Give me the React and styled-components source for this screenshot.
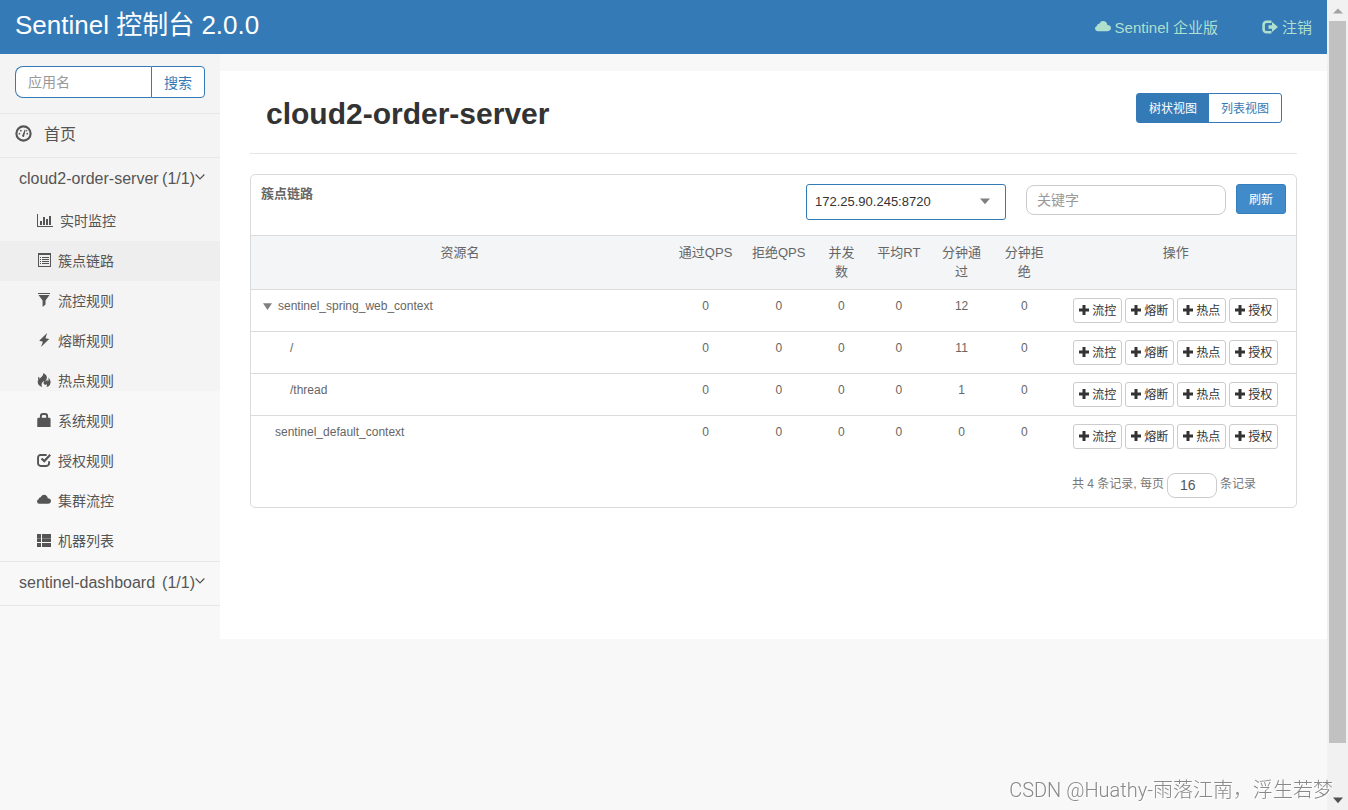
import React, { useState } from "react";
import styled, { createGlobalStyle } from "styled-components";

const menuItems = [
  { label: "实时监控", icon: "stats" },
  { label: "簇点链路", icon: "list" },
  { label: "流控规则", icon: "filter" },
  { label: "熔断规则", icon: "flash" },
  { label: "热点规则", icon: "fire" },
  { label: "系统规则", icon: "lock" },
  { label: "授权规则", icon: "check" },
  { label: "集群流控", icon: "cloud" },
  { label: "机器列表", icon: "grid" },
];

const columns = [
  { title: "资源名", width: "40%" },
  { title: "通过QPS", width: "7%" },
  { title: "拒绝QPS", width: "7%" },
  { title: "并发数", width: "5%" },
  { title: "平均RT", width: "6%" },
  { title: "分钟通过", width: "6%" },
  { title: "分钟拒绝", width: "6%" },
  { title: "操作", width: "23%" },
];

const resources = [
  { name: "sentinel_spring_web_context", depth: 0, parent: true, stats: [0, 0, 0, 0, 12, 0] },
  { name: "/", depth: 1, stats: [0, 0, 0, 0, 11, 0] },
  { name: "/thread", depth: 1, stats: [0, 0, 0, 0, 1, 0] },
  { name: "sentinel_default_context", depth: 0, stats: [0, 0, 0, 0, 0, 0] },
];

const actions = ["流控", "熔断", "热点", "授权"];

const icons = {
  cloud: (
    <path d="M2.600 12.200A2.700 2.700 0 0 1 0 9.600c0-1.300.9-2.200 2-2.500C2 5.600 3.200 4.700 4.300 4.900 5 3.200 6.300 2 8 2c2.300 0 4 1.600 4.300 4 2.200 0 3.700 1.300 3.700 3.100 0 1.800-1.500 3.100-3.300 3.100z" />
  ),
  logout: (
    <>
      <path
        d="M9.500 2.700H4.500A2.900 2.900 0 0 0 1.600 5.600v4.800a2.900 2.900 0 0 0 2.900 2.900h5"
        fill="none"
        stroke="currentColor"
        strokeWidth="2.600"
      />
      <path d="M6.500 6.200H10V3L16 8l-6 5V9.800H6.500z" />
    </>
  ),
  dashboard: (
    <>
      <circle cx="8" cy="8" r="6.700" fill="none" stroke="currentColor" strokeWidth="2" />
      <path d="M7 9.500 9.200 4.200l.8.4-1.300 5.600a1 1 0 1 1-1.700-.7z" />
      <circle cx="4.200" cy="8.200" r=".8" />
      <circle cx="5.500" cy="5.300" r=".8" />
      <circle cx="11.500" cy="8.200" r=".8" />
      <circle cx="11" cy="5.300" r=".7" />
    </>
  ),
  stats: <path d="M0 2h1v12h15v1H0zM3 9h2v4H3zM6 5h2v8H6zM9 7h2v6H9zM12 4h2v9h-2z" />,
  list: (
    <path
      transform="scale(1.143)"
      fillRule="evenodd"
      d="M1 0h13v14H1zM2 2v11h11V2zM3 4h1v1H3zm2 0h7v1H5zM3 6h1v1H3zm2 0h7v1H5zM3 8h1v1H3zm2 0h7v1H5zM3 10h1v1H3zm2 0h7v1H5z"
    />
  ),
  filter: <path transform="scale(1.143)" d="M1 0h12v1H1zM1.500 2h11L8.500 7.500v4L5.600 14V7.500z" />,
  flash: <path d="M11.500 0 2.500 8.800l4.300 1.100L4.500 16 14 6.900 9.700 5.900z" />,
  fire: (
    <path d="M7 0c3.500 1.600 5 4 4 6.700-.4 1-1.300 1.700-1 2.700.9-.2 1.300-1.200 1.200-2.200 1 .6 1.300 1.700.9 2.700 1.300-1 1.500-2.700.6-4.900 2.800 2.300 3.500 5.400 2.200 8-.8 1.500-2.200 2.600-4.300 3 1-1.100 1-2.200.4-3.200-1.100 1-2.500.8-3.200-.3-.6-1-.2-2.200.7-3.500-3 1-4.200 3.900-2.500 6.900C3 15.200.7 13 .8 10c.1-2 1.500-3 3-4.300C5.800 4 7.600 2.500 7 0zM2.200 4.300c.9 1 .7 2.300-.6 3.400C.8 6.500 1 5.200 2.200 4.300z" />
  ),
  lock: (
    <path
      fillRule="evenodd"
      d="M3.300 5.500V3.500A3.500 3.500 0 0 1 6.800 0h2.400a3.500 3.500 0 0 1 3.500 3.500v2H14A1.500 1.500 0 0 1 15.500 7v9H.3V7a1.500 1.500 0 0 1 1.500-1.500zm2.200 0h5V4a1.700 1.700 0 0 0-1.700-1.700H7.200A1.700 1.700 0 0 0 5.500 4z"
    />
  ),
  check: (
    <>
      <path
        d="M11 2.200H4.200a3 3 0 0 0-3 3v6.600a3 3 0 0 0 3 3h6.600a3 3 0 0 0 3-3V9.500"
        fill="none"
        stroke="currentColor"
        strokeWidth="2.200"
      />
      <path d="m4.300 7 1.700-1.700 2.300 2.200L14.300 1 16 2.800 8.400 11.200z" />
    </>
  ),
  grid: (
    <path
      transform="scale(1.143)"
      d="M0 1h4v4H0zM5 1h9v4H5zM0 5.300h4V9H0zM5 5.300h9V9H5zM0 10h4v4H0zM5 10h9v4H5z"
    />
  ),
  plus: <path d="M5.600 0h4.800v5.600H16v4.800h-5.600V16H5.600v-5.600H0V5.600h5.600z" />,
  chevron: <path d="M1 4l7 7 7-7" fill="none" stroke="currentColor" strokeWidth="2" />,
  caret: <path d="M0 4h16L8 13z" />,
  triangle: <path d="M0 2h16L8 14z" />,
  up: <path d="M0 12h16L8 4z" />,
};

const Icon = ({ name, size = 14 }) => (
  <Glyph viewBox="0 0 16 16" $size={size} aria-hidden="true">
    {icons[name]}
  </Glyph>
);

const App = () => {
  const [active, setActive] = useState("簇点链路");
  const [view, setView] = useState("tree");
  const [open, setOpen] = useState(true);

  const rows = resources.filter((row) => open || row.depth === 0);

  return (
    <Window>
      <GlobalStyle />
      <Page>
        <Header>
          <Brand>Sentinel 控制台 2.0.0</Brand>
          <HeaderLinks>
            <HeaderLink href="#pro">
              <Icon name="cloud" size={16} />
              Sentinel 企业版
            </HeaderLink>
            <HeaderLink href="#logout">
              <Icon name="logout" size={16} />
              注销
            </HeaderLink>
          </HeaderLinks>
        </Header>
        <Body>
          <Sidebar>
            <SearchForm onSubmit={(e) => e.preventDefault()}>
              <SearchInput placeholder="应用名" aria-label="应用名" />
              <SearchButton type="submit">搜索</SearchButton>
            </SearchForm>
            <HomeLink href="#home">
              <Icon name="dashboard" size={17} />
              首页
            </HomeLink>
            <AppToggle type="button">
              <span>cloud2-order-server</span>
              <Count>(1/1)</Count>
              <Icon name="chevron" size={10} />
            </AppToggle>
            <nav>
              {menuItems.map((item) => (
                <MenuLink
                  key={item.label}
                  href={`#${item.icon}`}
                  $active={active === item.label}
                  onClick={() => setActive(item.label)}
                >
                  <Icon name={item.icon} size={item.icon === "stats" ? 16 : 14} />
                  {item.label}
                </MenuLink>
              ))}
            </nav>
            <AppToggle type="button" $bordered>
              <span>sentinel-dashboard</span>
              <Count>(1/1)</Count>
              <Icon name="chevron" size={10} />
            </AppToggle>
          </Sidebar>
          <Content>
            <TitleBar>
              <Title>cloud2-order-server</Title>
              <ViewSwitch>
                <ViewButton type="button" $active={view === "tree"} onClick={() => setView("tree")}>
                  树状视图
                </ViewButton>
                <ViewButton type="button" $active={view === "list"} onClick={() => setView("list")}>
                  列表视图
                </ViewButton>
              </ViewSwitch>
            </TitleBar>
            <Card>
              <CardHeader>
                <CardTitle>簇点链路</CardTitle>
                <SelectBox>
                  <MachineSelect aria-label="机器">
                    <option>172.25.90.245:8720</option>
                  </MachineSelect>
                  <Icon name="caret" size={10} />
                </SelectBox>
                <KeywordInput placeholder="关键字" aria-label="关键字" />
                <RefreshButton type="button">刷新</RefreshButton>
              </CardHeader>
              <Table>
                <colgroup>
                  {columns.map((col) => (
                    <Col key={col.title} $width={col.width} />
                  ))}
                </colgroup>
                <thead>
                  <tr>
                    {columns.map((col) => (
                      <Th key={col.title}>{col.title}</Th>
                    ))}
                  </tr>
                </thead>
                <tbody>
                  {rows.map((row) => (
                    <tr key={row.name}>
                      <NameCell $depth={row.depth} $parent={row.parent}>
                        {row.parent && (
                          <TreeToggle type="button" aria-label="展开" onClick={() => setOpen(!open)}>
                            <Icon name="triangle" size={9} />
                          </TreeToggle>
                        )}
                        {row.name}
                      </NameCell>
                      {row.stats.map((value, i) => (
                        <Td key={i}>{value}</Td>
                      ))}
                      <Td>
                        <Actions>
                          {actions.map((action) => (
                            <ActionButton type="button" key={action}>
                              <Icon name="plus" size={10} />
                              {action}
                            </ActionButton>
                          ))}
                        </Actions>
                      </Td>
                    </tr>
                  ))}
                </tbody>
              </Table>
              <Pager>
                <label htmlFor="page-size">共 4 条记录, 每页</label>
                <PageSize id="page-size" defaultValue="16" />
                <span>条记录</span>
              </Pager>
            </Card>
          </Content>
        </Body>
      </Page>
      <ScrollTrack>
        <ScrollButton type="button" aria-label="up">
          <Icon name="up" size={10} />
        </ScrollButton>
        <ScrollRail>
          <ScrollThumb />
        </ScrollRail>
        <ScrollButton type="button" aria-label="down" $down>
          <Icon name="caret" size={10} />
        </ScrollButton>
      </ScrollTrack>
      <Watermark>CSDN @Huathy-雨落江南，浮生若梦</Watermark>
    </Window>
  );
};

const GlobalStyle = createGlobalStyle`
  * {
    box-sizing: border-box;
  }
  body {
    margin: 0;
    background: #f8f8f8;
    color: #555;
    font-size: 14px;
    line-height: 20px;
  }
  body, button, input, select {
    font-family: "Liberation Sans", "Noto Sans CJK SC", sans-serif;
  }
  button {
    cursor: pointer;
  }
  a {
    color: inherit;
    text-decoration: none;
  }
`;

const Glyph = styled.svg`
  flex: none;
  width: ${(props) => props.$size}px;
  height: ${(props) => props.$size}px;
  fill: currentColor;
`;

const Window = styled.div`
  display: grid;
  grid-template-columns: 1fr 21px;
  min-height: 100vh;
`;

const Page = styled.div`
  min-width: 0;
`;

const Header = styled.header`
  display: flex;
  justify-content: space-between;
  height: 54px;
  padding: 0 15px;
  background: #337ab7;
`;

const Brand = styled.div`
  color: #fff;
  font-size: 26px;
  line-height: 50px;
`;

const HeaderLinks = styled.nav`
  display: flex;
  gap: 44px;
  padding-top: 2px;
`;

const HeaderLink = styled.a`
  display: flex;
  align-items: center;
  gap: 4px;
  color: #afdfcd;
  font-size: 15px;
  svg {
    margin-bottom: 2px;
  }
`;

const Body = styled.div`
  display: flex;
  align-items: flex-start;
`;

const Sidebar = styled.aside`
  flex: none;
  width: 220px;
  background: linear-gradient(#f4f4f4, #f4f4f4) no-repeat 0 0 / 100% 337px;
`;

const SearchForm = styled.form`
  display: flex;
  padding: 12px 15px 15px;
  border-bottom: 1px solid #e7e7e7;
`;

const SearchInput = styled.input`
  flex: 1;
  min-width: 0;
  height: 32px;
  padding: 0 12px;
  border: 1px solid #337ab7;
  border-right: 0;
  border-radius: 8px 0 0 8px;
  background: #fff;
  font-size: 14px;
  &::placeholder {
    color: #999;
  }
`;

const SearchButton = styled.button`
  height: 32px;
  padding: 0 12px;
  border: 1px solid #337ab7;
  border-radius: 0 4px 4px 0;
  background: #fff;
  color: #337ab7;
  font-size: 14px;
`;

const HomeLink = styled.a`
  display: flex;
  align-items: center;
  gap: 12px;
  height: 44px;
  padding: 0 15px 2px;
  border-bottom: 1px solid #e7e7e7;
  font-size: 16px;
  svg {
    margin-bottom: 2px;
  }
`;

const AppToggle = styled.button`
  display: flex;
  align-items: center;
  width: 100%;
  height: ${(props) => (props.$bordered ? 45 : 43)}px;
  padding: 0 15px 2px 19px;
  border: 0 solid #e7e7e7;
  border-width: ${(props) => (props.$bordered ? "1px 0" : "0")};
  background: none;
  color: #555;
  font-size: 16px;
  svg {
    margin-bottom: 4px;
  }
`;

const Count = styled.span`
  margin-left: auto;
`;

const MenuLink = styled.a`
  display: flex;
  align-items: center;
  gap: 7px;
  height: 40px;
  padding-left: 37px;
  background: ${(props) => (props.$active ? "#eee" : "transparent")};
  svg {
    margin-bottom: 2px;
  }
`;

const Content = styled.main`
  flex: 1;
  min-width: 0;
  min-height: 568px;
  margin-top: 17px;
  padding: 0 30px;
  background: #fff;
`;

const TitleBar = styled.div`
  display: flex;
  justify-content: space-between;
  align-items: flex-start;
  height: 83px;
  padding: 22px 15px 0 16px;
  border-bottom: 1px solid #e5e5e5;
`;

const Title = styled.h1`
  margin: 0;
  color: #333;
  font-size: 30px;
  line-height: 42px;
`;

const ViewSwitch = styled.div`
  display: flex;
  border: 1px solid #337ab7;
  border-radius: 3px;
`;

const ViewButton = styled.button`
  height: 28px;
  padding: 0 12px 2px;
  border: 0;
  background: ${(props) => (props.$active ? "#337ab7" : "transparent")};
  color: ${(props) => (props.$active ? "#fff" : "#337ab7")};
  font-size: 12px;
`;

const Card = styled.section`
  margin-top: 20px;
  border: 1px solid #dadbdc;
  border-radius: 5px;
`;

const CardHeader = styled.div`
  display: flex;
  align-items: flex-start;
  height: 60px;
  padding: 9px 10px;
`;

const CardTitle = styled.strong`
  margin-right: auto;
  color: #666;
  font-size: 13px;
`;

const SelectBox = styled.div`
  position: relative;
  width: 200px;
  margin-right: 20px;
  svg {
    position: absolute;
    top: 12px;
    right: 16px;
    color: #808080;
    pointer-events: none;
  }
`;

const MachineSelect = styled.select`
  appearance: none;
  width: 100%;
  height: 36px;
  padding: 0 8px 2px;
  border: 1px solid #337ab7;
  border-radius: 3px;
  background: #fff;
  color: #333;
  font-size: 13px;
`;

const KeywordInput = styled.input`
  width: 200px;
  height: 30px;
  margin: 1px 10px 0 0;
  padding: 0 10px;
  border: 1px solid #ccc;
  border-radius: 8px;
  font-size: 14px;
  &::placeholder {
    color: #999;
  }
`;

const RefreshButton = styled.button`
  height: 30px;
  padding: 0 12px 2px;
  border: 1px solid #357ebd;
  border-radius: 3px;
  background: #428bca;
  color: #fff;
  font-size: 12px;
`;

const Table = styled.table`
  width: 100%;
  table-layout: fixed;
  border-collapse: separate;
  border-spacing: 0;
`;

const Col = styled.col`
  width: ${(props) => props.$width};
`;

const Th = styled.th`
  padding: 7px 8px 8px;
  border-top: 1px solid #dadbdc;
  background: #f3f5f7;
  color: #666;
  font-size: 13px;
  font-weight: normal;
  line-height: 19px;
  vertical-align: top;
`;

const Td = styled.td`
  height: 42px;
  padding: 8px;
  border-top: 1px solid #dadbdc;
  color: #666;
  font-size: 12px;
  line-height: 17px;
  text-align: center;
  vertical-align: top;
`;

const NameCell = styled(Td)`
  padding-left: ${(props) => (props.$parent ? 12 : 24 + props.$depth * 15)}px;
  text-align: left;
`;

const TreeToggle = styled.button`
  width: 15px;
  padding: 0;
  border: 0;
  background: none;
  color: #808080;
  text-align: left;
  vertical-align: middle;
  svg {
    display: block;
  }
`;

const Actions = styled.div`
  display: flex;
  justify-content: center;
  gap: 3px;
`;

const ActionButton = styled.button`
  display: flex;
  align-items: center;
  gap: 3px;
  height: 25px;
  padding: 0 5px 2px;
  border: 1px solid #ccc;
  border-radius: 3px;
  background: #fff;
  color: #333;
  font-size: 12px;
`;

const Pager = styled.div`
  display: flex;
  justify-content: flex-end;
  gap: 3px;
  padding: 16px 40px 9px;
  color: #777;
  font-size: 12px;
  line-height: 22px;
`;

const PageSize = styled.input`
  width: 50px;
  height: 25px;
  padding: 0 12px 2px;
  border: 1px solid #ccc;
  border-radius: 8px;
  color: #555;
  font-size: 14px;
`;

const ScrollTrack = styled.div`
  position: sticky;
  top: 0;
  display: flex;
  flex-direction: column;
  height: 100vh;
  background: #f1f1f1;
`;

const ScrollButton = styled.button`
  display: flex;
  align-items: center;
  justify-content: center;
  height: 21px;
  padding: 0;
  border: 0;
  background: none;
  color: ${(props) => (props.$down ? "#505050" : "#a3a3a3")};
`;

const ScrollRail = styled.div`
  flex: 1;
  padding: 0 2px;
`;

const ScrollThumb = styled.div`
  height: 94%;
  background: #c1c1c1;
`;

const Watermark = styled.div`
  position: fixed;
  right: 15px;
  bottom: 8px;
  color: #888;
  font-family: Roboto, "Noto Sans CJK SC", sans-serif;
  font-size: 20px;
  font-weight: 300;
  line-height: 24px;
  text-shadow: 1px 1px 0 #fff;
  pointer-events: none;
`;

export default App;
